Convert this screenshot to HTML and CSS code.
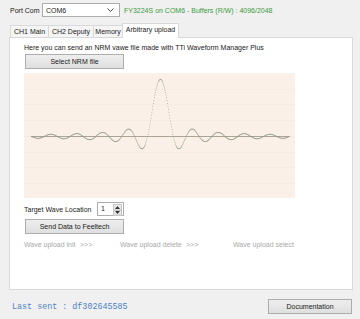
FILE: index.html
```html
<!DOCTYPE html>
<html lang="en">
<head>
  <meta charset="UTF-8">
  <meta name="viewport" content="width=device-width, initial-scale=1.0">
  <title>FeelTech Arbitrary Upload</title>
  <link rel="stylesheet" href="styles.css">
</head>
<body>
  <div class="window">
    <div class="port-row">
      <span class="port-label">Port Com</span>
      <div class="combo">
        <span class="combo-text">COM6</span>
        <svg class="combo-arrow" width="7" height="4" viewBox="0 0 7 4">
          <path d="M0.5 0.5 L3.5 3.5 L6.5 0.5" fill="none" stroke="#444" stroke-width="1"/>
        </svg>
      </div>
      <span class="status">FY3224S on COM6 - Buffers (R/W) : 4096/2048</span>
    </div>

    <div class="tabs">
      <div class="tab tab-ch1">CH1 Main</div>
      <div class="tab tab-ch2">CH2 Deputy</div>
      <div class="tab tab-mem">Memory</div>
      <div class="tab tab-arb active">Arbitrary upload</div>
    </div>

    <div class="tab-panel">
      <p class="intro">Here you can send an NRM vawe file made with TTi Waveform Manager Plus</p>
      <button class="btn btn-wide">Select NRM file</button>

      <div class="chart">
        <svg id="waveChart" width="271" height="125" viewBox="0 0 271 125"></svg>
      </div>

      <div class="location-row">
        <span class="location-label">Target Wave Location</span>
        <div class="spinner">
          <span class="spinner-value">1</span>
          <div class="spinner-buttons">
            <div class="spin-btn">
              <svg width="5" height="3" viewBox="0 0 5 3"><path d="M0 3 L2.5 0 L5 3 Z" fill="#333"/></svg>
            </div>
            <div class="spin-btn">
              <svg width="5" height="3" viewBox="0 0 5 3"><path d="M0 0 L2.5 3 L5 0 Z" fill="#333"/></svg>
            </div>
          </div>
        </div>
      </div>

      <button class="btn btn-wide btn-send">Send Data to Feeltech</button>

      <div class="steps">
        <span>Wave upload init</span>
        <span>&gt;&gt;&gt;</span>
        <span>Wave upload delete</span>
        <span>&gt;&gt;&gt;</span>
        <span>Wave upload select</span>
      </div>
    </div>

    <div class="footer">
      <span class="last-sent">Last sent : df302645585</span>
      <button class="btn btn-doc">Documentation</button>
    </div>
  </div>

  <script src="chart.js"></script>
</body>
</html>
```

FILE: styles.css
```css
:root {
  --window-bg: #f0f0f0;
  --panel-bg: #ffffff;
  --border-color: #d9d9d9;
  --input-border: #abadb3;
  --btn-border: #adadad;
  --text-color: #1a1a1a;
  --status-color: #3c9a3c;
  --muted-text: #a9a9a9;
  --mono-blue: #4a84c4;
  --chart-bg: #fbf0e8;
}

body {
  margin: 0;
  padding: 0;
  background-color: var(--window-bg);
  color: var(--text-color);
  font-family: "Liberation Sans", Arial, sans-serif;
  font-size: 7px;
}

.window {
  width: 360px;
  height: 319px;
  overflow: hidden;
}

.port-row {
  display: flex;
  align-items: center;
  height: 14px;
  padding: 3px 0 0 10px;
}

.port-label {
  width: 32px;
}

.combo {
  box-sizing: border-box;
  width: 78px;
  height: 14px;
  background-color: white;
  border: 1px solid var(--input-border);
  display: flex;
  align-items: center;
  justify-content: space-between;
  padding: 0 5px 0 3px;
}

.status {
  margin-left: 4px;
  color: var(--status-color);
}

.tabs {
  display: flex;
  align-items: flex-end;
  height: 14px;
  margin-top: 6px;
  padding-left: 10px;
}

.tab {
  box-sizing: border-box;
  height: 12px;
  line-height: 11px;
  border: 1px solid var(--border-color);
  border-bottom: none;
  background-color: #f5f5f5;
  text-align: center;
  margin-right: -1px;
}

.tab-ch1 { width: 39px; }
.tab-ch2 { width: 46px; }
.tab-mem { width: 30px; }

.tab-arb {
  width: 57px;
}

.tab.active {
  height: 15px;
  line-height: 12px;
  margin-bottom: -1px;
  background-color: var(--panel-bg);
  position: relative;
  z-index: 1;
}

.tab-panel {
  box-sizing: border-box;
  width: 344px;
  height: 253px;
  margin-left: 9px;
  padding: 4px 0 0 14px;
  background-color: var(--panel-bg);
  border: 1px solid var(--border-color);
}

.intro {
  margin: 0;
  line-height: 11px;
}

.btn {
  box-sizing: border-box;
  height: 15px;
  padding: 0;
  border: 1px solid var(--btn-border);
  background: linear-gradient(#eeeeee, #dfdfdf);
  font-family: "Liberation Sans", Arial, sans-serif;
  font-size: 7px;
  color: var(--text-color);
  display: block;
}

.btn-wide {
  width: 99px;
  margin: 1px 0 0 1px;
}

.chart {
  width: 271px;
  height: 125px;
  margin-top: 4px;
  background-color: var(--chart-bg);
}

.chart svg {
  display: block;
}

.location-row {
  display: flex;
  align-items: center;
  height: 14px;
  margin-top: 4px;
}

.location-label {
  width: 73px;
}

.spinner {
  box-sizing: border-box;
  width: 27px;
  height: 14px;
  border: 1px solid var(--input-border);
  background-color: white;
  display: flex;
  justify-content: space-between;
}

.spinner-value {
  padding-left: 3px;
  line-height: 12px;
}

.spinner-buttons {
  display: flex;
  flex-direction: column;
  width: 9px;
  margin: 1px 1px 0 0;
}

.spin-btn {
  height: 5px;
  background: linear-gradient(#f0f0f0, #dcdcdc);
  border: 1px solid #c5c5c5;
  margin-bottom: -1px;
  display: flex;
  align-items: center;
  justify-content: center;
}

.spin-btn svg {
  display: block;
}

.btn-send {
  margin-top: 3px;
}

.steps {
  display: grid;
  grid-template-columns: 56px 40px 66px 47px auto;
  margin-top: 5px;
  line-height: 11px;
  color: var(--muted-text);
}

.footer {
  display: flex;
  justify-content: space-between;
  align-items: center;
  margin-top: 9px;
  padding: 0 8px 0 12px;
}

.last-sent {
  font-family: "Liberation Mono", "Courier New", monospace;
  font-size: 8.4px;
  color: var(--mono-blue);
}

.btn-doc {
  width: 84px;
}
```

FILE: chart.js
```js
// draws the NRM preview: grid, zero line and the sinc shaped wave
const svg = document.getElementById('waveChart');
const NS = 'http://www.w3.org/2000/svg';

const plotLeft = 7;
const plotRight = 265;
const center = 136;
const base = 63;
const amp = 57;
const unit = 12.9;

function add(tag, attrs) {
  const el = document.createElementNS(NS, tag);
  for (const k in attrs) el.setAttribute(k, attrs[k]);
  svg.appendChild(el);
  return el;
}

for (let k = 1; k < 8; k++) {
  const y = Math.round(k * 15.7) + 0.5;
  add('line', { x1: 0, x2: 271, y1: y, y2: y, stroke: '#f6ebe3', 'stroke-width': 1 });
}

add('line', { x1: plotLeft, x2: plotRight, y1: base + 0.5, y2: base + 0.5, stroke: '#aaa396', 'stroke-width': 1 });

for (let x = plotLeft; x <= plotRight; x += 0.5) {
  const t = (x - center) / unit;
  const v = t === 0 ? 1 : Math.sin(Math.PI * t) / (Math.PI * t);
  const y = base - amp * v;
  add('rect', { x: x, y: y, width: 0.8, height: 0.8, fill: '#8e9a86' });
}
```
